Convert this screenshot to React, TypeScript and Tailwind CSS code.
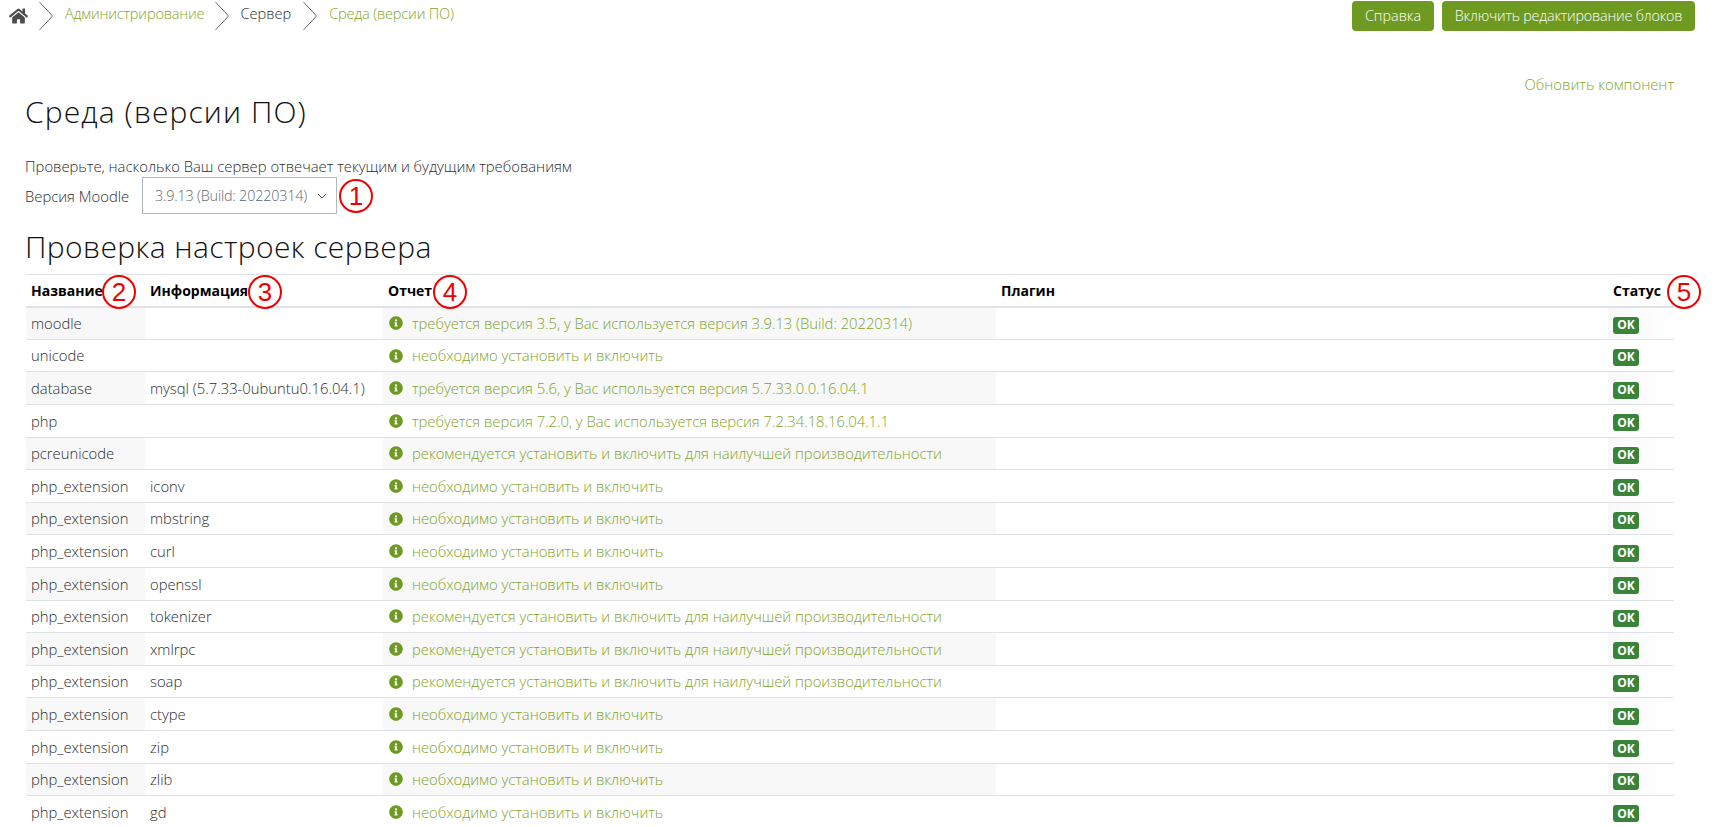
import { FaHome, FaInfoCircle } from "react-icons/fa";

const REQ = "необходимо установить и включить";
const REC = "рекомендуется установить и включить для наилучшей производительности";

const rows: [string, string, string][] = [
  ["moodle", "", "требуется версия 3.5, у Вас используется версия 3.9.13 (Build: 20220314)"],
  ["unicode", "", REQ],
  ["database", "mysql (5.7.33-0ubuntu0.16.04.1)", "требуется версия 5.6, у Вас используется версия 5.7.33.0.0.16.04.1"],
  ["php", "", "требуется версия 7.2.0, у Вас используется версия 7.2.34.18.16.04.1.1"],
  ["pcreunicode", "", REC],
  ["php_extension", "iconv", REQ],
  ["php_extension", "mbstring", REQ],
  ["php_extension", "curl", REQ],
  ["php_extension", "openssl", REQ],
  ["php_extension", "tokenizer", REC],
  ["php_extension", "xmlrpc", REC],
  ["php_extension", "soap", REC],
  ["php_extension", "ctype", REQ],
  ["php_extension", "zip", REQ],
  ["php_extension", "zlib", REQ],
  ["php_extension", "gd", REQ],
];

function Chevron() {
  return (
    <svg width="16" height="30" viewBox="0 0 16 30" className="shrink-0" fill="none" stroke="#666" strokeWidth="1">
      <path d="M1.5 1 L14.5 15 L1.5 29" />
    </svg>
  );
}

function Mark({ n, className }: { n: number; className: string }) {
  return (
    <span
      className={
        "absolute flex h-[34px] w-[34px] items-center justify-center rounded-full border-2 border-[#f00000] bg-white font-['Liberation_Sans'] text-[26px] font-normal leading-none text-[#f00000] " +
        className
      }
    >
      {n}
    </span>
  );
}

export default function App() {
  return (
    <div className="relative h-screen overflow-hidden bg-white font-['Open_Sans',sans-serif] text-[14.8px] font-light text-[#2b2e30]">
      <header className="flex items-start justify-between pl-[9px] pr-[22px] pt-px">
        <nav className="flex h-[30px] items-center text-[14.6px]">
          <FaHome className="mr-[10px] h-[18px] w-[19px] text-[#4d4d4d]" />
          <Chevron />
          <a className="ml-[11px] mr-[10px] -translate-y-0.5 tracking-[-0.2px] text-[#7fa52a]">Администрирование</a>
          <Chevron />
          <span className="ml-[10px] mr-[11px] -translate-y-0.5">Сервер</span>
          <Chevron />
          <a className="ml-[11px] -translate-y-0.5 tracking-[-0.2px] text-[#7fa52a]">Среда (версии ПО)</a>
        </nav>
        <div className="flex gap-2 text-[14.4px]">
          <button className="h-[30px] w-[82px] rounded bg-[#6f9a21] text-white">Справка</button>
          <button className="h-[30px] w-[253px] rounded bg-[#6f9a21] tracking-[-0.2px] text-white">Включить редактирование блоков</button>
        </div>
      </header>

      <div className="pr-[43px] pt-[42px] text-right text-[#7fa52a]">Обновить компонент</div>

      <main className="pl-[25px]">
        <h2 className="text-[30px] font-light leading-[34px] tracking-[1.1px] text-[#111]">Среда (версии ПО)</h2>
        <p className="mt-[27px] leading-5">Проверьте, насколько Ваш сервер отвечает текущим и будущим требованиям</p>
        <div className="relative mt-px flex items-center">
          <span className="w-[117px]">Версия Moodle</span>
          <div className="flex h-[37px] w-[195px] items-center justify-between border border-[#b0b8c0] pl-3 pr-[9px] text-[14.4px] text-[#5f6870]">
            <span className="tracking-[-0.2px]">3.9.13 (Build: 20220314)</span>
            <svg width="10" height="6" viewBox="0 0 10 6" fill="none" stroke="#555" strokeWidth="1" className="shrink-0">
              <path d="M1 1 L5 5 L9 1" />
            </svg>
          </div>
          <Mark n={1} className="left-[314px] top-[2px]" />
        </div>
        <h3 className="mt-[16px] text-[30px] font-light leading-[34px] tracking-[0.4px] text-[#111]">Проверка настроек сервера</h3>

        <table className="ml-px mt-[10px] w-[1648px] table-fixed border-collapse">
          <colgroup>
            <col className="w-[119px]" />
            <col className="w-[238px]" />
            <col className="w-[613px]" />
            <col className="w-[612px]" />
            <col className="w-[66px]" />
          </colgroup>
          <thead>
            <tr className="h-[32px] border-b-2 border-t border-[#dee2e6] text-left text-[14px] text-black">
              <th className="relative px-[5px] font-bold">Название<Mark n={2} className="left-[76px] top-0" /></th>
              <th className="relative px-[5px] font-bold">Информация<Mark n={3} className="left-[103px] top-0" /></th>
              <th className="relative px-[5px] font-bold">Отчет<Mark n={4} className="left-[50px] top-0" /></th>
              <th className="px-[5px] font-bold">Плагин</th>
              <th className="relative px-[5px] font-bold">Статус<Mark n={5} className="left-[59px] top-0" /></th>
            </tr>
          </thead>
          <tbody>
            {rows.map(([name, info, report], i) => {
              const odd = i % 2 === 0;
              return (
                <tr key={i} className="h-[32.6px] border-b border-[#dee2e6]">
                  <td className={"truncate px-[5px] " + (odd ? "bg-[#f8f8f8]" : "")}>{name}</td>
                  <td className="truncate px-[5px]">{info}</td>
                  <td className={"px-[5px] " + (odd ? "bg-[#f8f8f8]" : "")}>
                    <span className="flex items-center gap-[9px] tracking-[-0.03px] text-[#7fa52a]">
                      <FaInfoCircle className="ml-px h-[14px] w-[14px] shrink-0 text-[#6f9a21]" />
                      {report}
                    </span>
                  </td>
                  <td />
                  <td className={"px-[5px] " + (odd ? "bg-gradient-to-r from-[#f8f8f8] to-white" : "")}>
                    <span className="inline-flex h-[17px] w-[26px] items-center justify-center rounded-[3px] bg-[#398439] text-[12px] font-bold leading-none text-white">OK</span>
                  </td>
                </tr>
              );
            })}
          </tbody>
        </table>
      </main>
    </div>
  );
}
